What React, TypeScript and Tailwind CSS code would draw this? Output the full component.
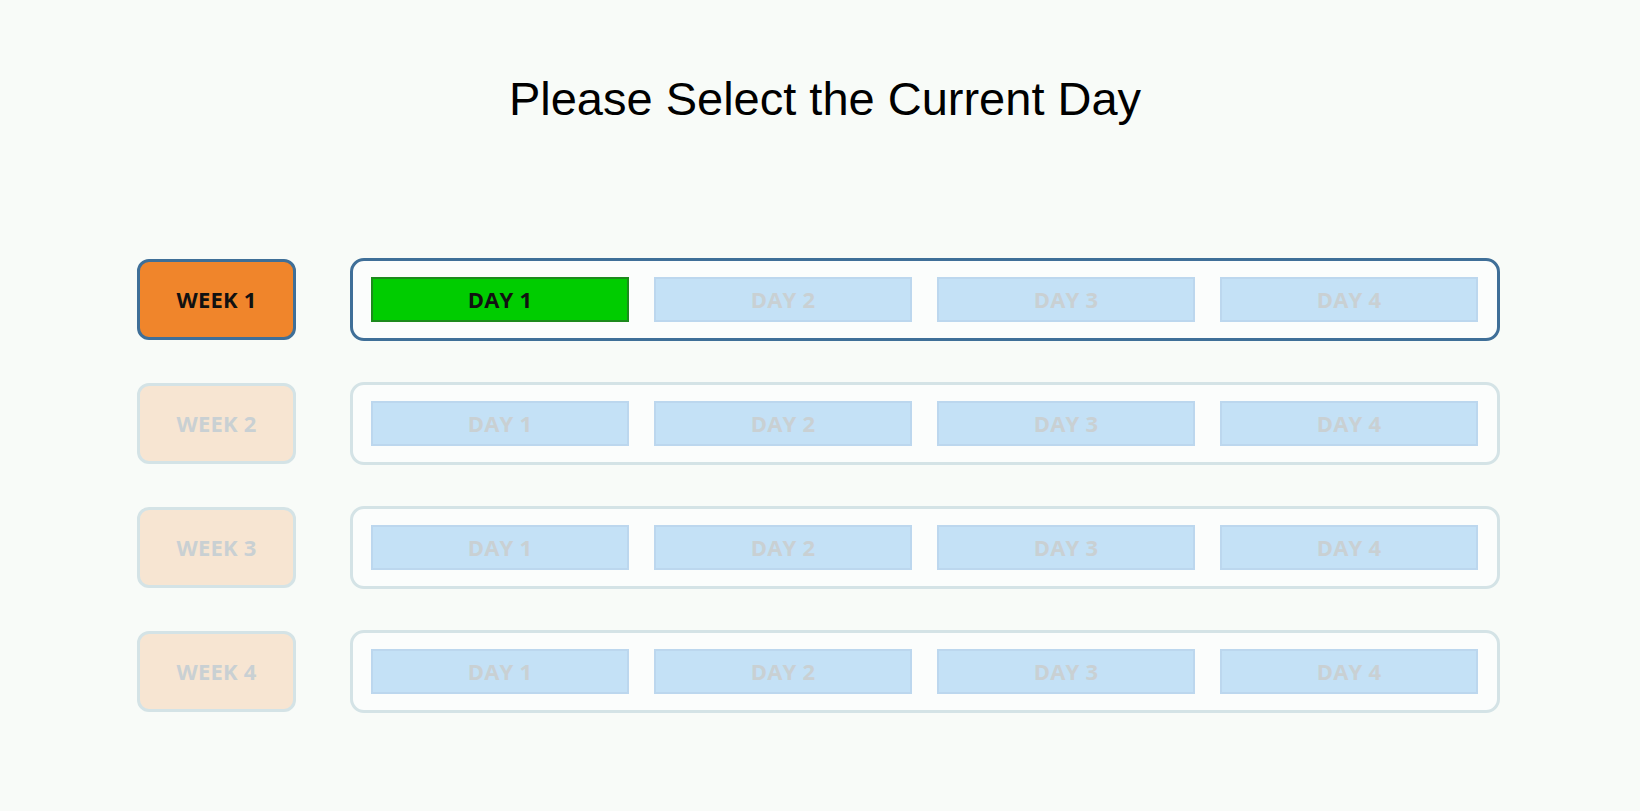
const weeks = [1, 2, 3, 4]
const days = [1, 2, 3, 4]

// current selection: week 1, day 1
const activeWeek = 1
const activeDay = 1

function DayButton({ day, active }: { day: number; active: boolean }) {
  if (active) {
    return (
      <button className="flex h-[45px] w-[258px] items-center justify-center border-2 border-[#1c8a1c] bg-[#00cc00] text-[22px] font-bold tracking-[0.2px] text-[#111]">
        DAY {day}
      </button>
    )
  }
  return (
    <button className="flex h-[45px] w-[258px] items-center justify-center border-2 border-[#bcd7ee] bg-[#c4e1f6] text-[22px] font-bold tracking-[0.2px] text-[#c9d0d3]">
      DAY {day}
    </button>
  )
}

function WeekRow({ week }: { week: number }) {
  const current = week === activeWeek
  return (
    <div className="flex h-[83px] items-center gap-[54px]">
      <div
        className={
          current
            ? 'flex h-[81px] w-[159px] items-center justify-center rounded-[12px] border-[3px] border-[#3f6f98] bg-[#f0852b] text-[22px] font-bold tracking-[0.2px] text-[#111]'
            : 'flex h-[81px] w-[159px] items-center justify-center rounded-[12px] border-[3px] border-[#d4e3e6] bg-[#f7e5d2] text-[22px] font-bold tracking-[0.2px] text-[#c9d0d3]'
        }
      >
        WEEK {week}
      </div>
      <div
        className={
          current
            ? 'flex h-[83px] w-[1150px] items-center gap-[25px] rounded-[14px] border-[3px] border-[#3f6f98] bg-[#fbfdfc] px-[18px]'
            : 'flex h-[83px] w-[1150px] items-center gap-[25px] rounded-[14px] border-[3px] border-[#d4e3e6] bg-[#fbfdfc] px-[18px]'
        }
      >
        {days.map((d) => (
          <DayButton key={d} day={d} active={current && d === activeDay} />
        ))}
      </div>
    </div>
  )
}

export default function App() {
  return (
    <div className="min-h-[811px] w-full bg-[#f8fbf8] pt-[75px] font-['Open_Sans',sans-serif]">
      <h1 className="pl-[10px] text-center font-['Liberation_Sans',Arial,sans-serif] text-[47px] leading-[47px] text-black">
        Please Select the Current Day
      </h1>
      <div className="mt-[136px] flex flex-col gap-[41px] pl-[137px]">
        {weeks.map((w) => (
          <WeekRow key={w} week={w} />
        ))}
      </div>
    </div>
  )
}
